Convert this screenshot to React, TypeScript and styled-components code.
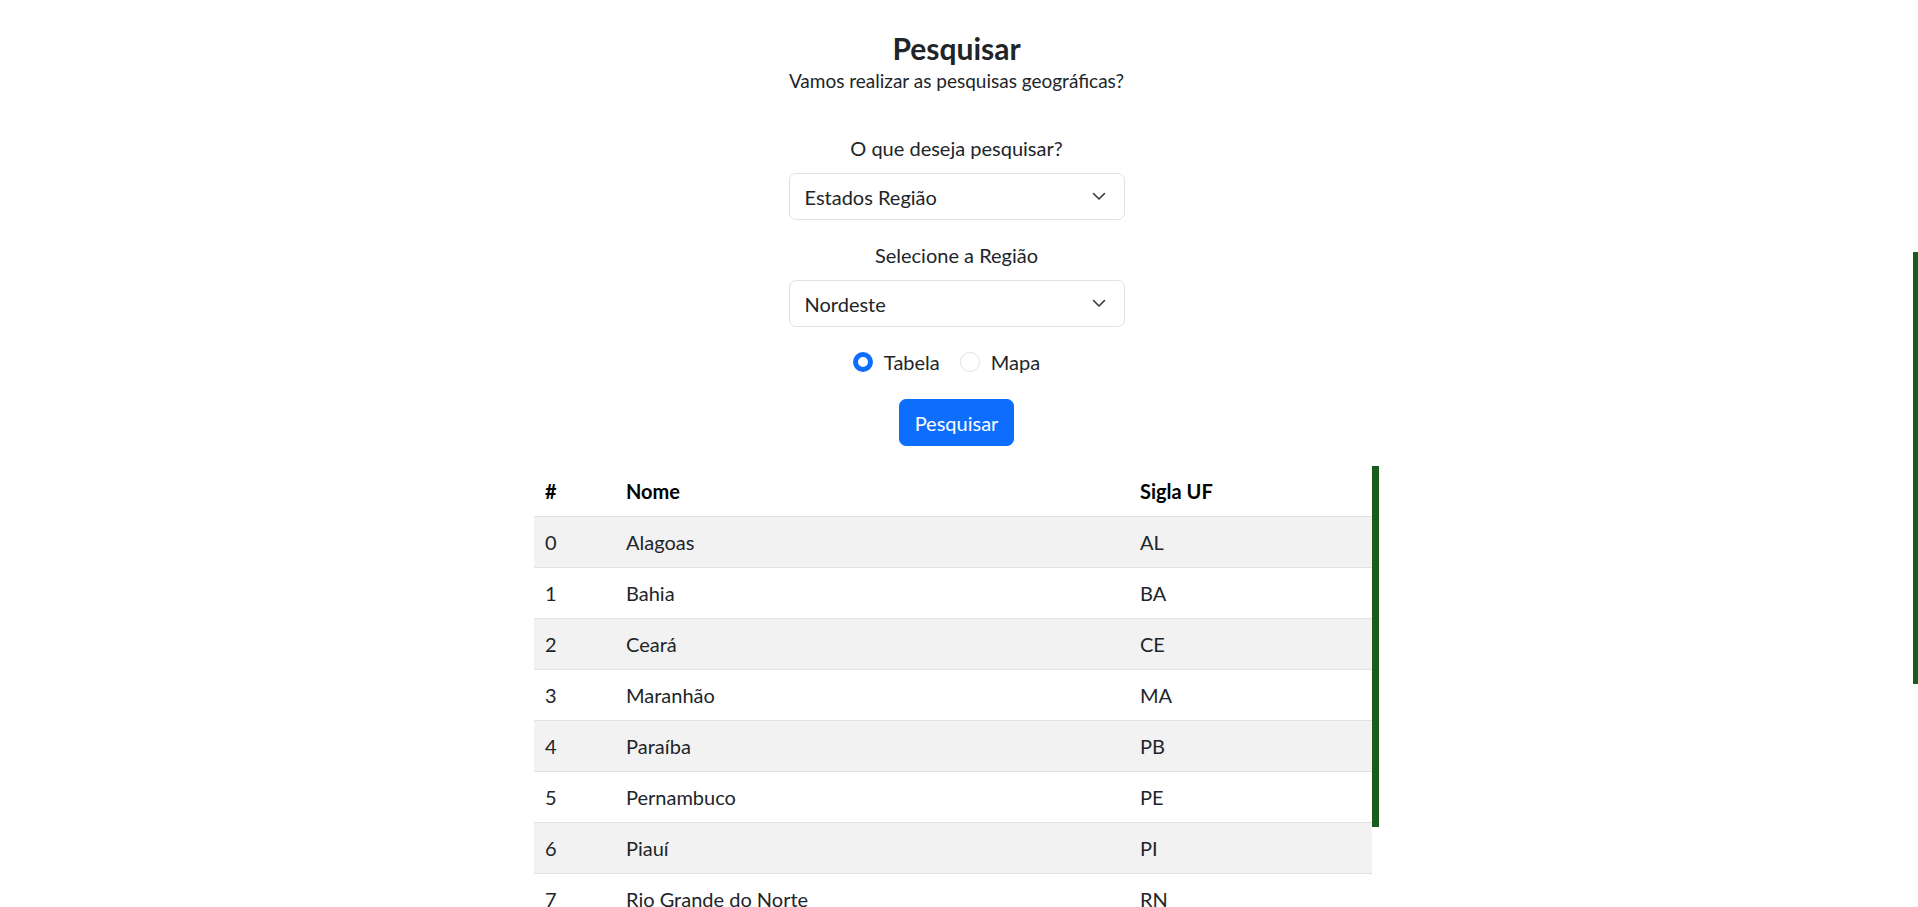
import React from "react";
import styled, { createGlobalStyle } from "styled-components";

const FONT = `Lato, "Liberation Sans", sans-serif`;

const GlobalStyle = createGlobalStyle`
  html, body {
    margin: 0;
    padding: 0;
    height: 100%;
    overflow: hidden;
    background: #ffffff;
  }
  body {
    font-family: ${FONT};
    font-size: 20px;
    line-height: 30px;
    color: #212529;
  }
  * { box-sizing: border-box; }
`;

const Page = styled.div`
  display: flex;
  align-items: flex-start;
  width: 100%;
`;

const Main = styled.main`
  flex: 1;
  display: flex;
  flex-direction: column;
  align-items: center;
  padding-top: 30px;
  min-width: 0;
  & > * {
    flex-shrink: 0;
  }
`;

const ScrollTrack = styled.div<{ $w: number }>`
  flex: 0 0 ${(p) => p.$w}px;
  width: ${(p) => p.$w}px;
  display: flex;
  flex-direction: column;
`;

const ScrollThumb = styled.div<{ $top: number; $h: number }>`
  margin-top: ${(p) => p.$top}px;
  height: ${(p) => p.$h}px;
  background: #1c5a1d;
`;

const Title = styled.h4`
  margin: 0;
  font-size: 30px;
  line-height: 36px;
  font-weight: 700;
  color: #212529;
`;

const Subtitle = styled.p`
  margin: 0;
  font-size: 19px;
  line-height: 30px;
`;

const Form = styled.form`
  width: 336px;
  margin-top: 37px;
  display: flex;
  flex-direction: column;
  align-items: stretch;
`;

const FieldLabel = styled.label<{ $first?: boolean }>`
  display: block;
  text-align: center;
  margin-top: ${(p) => (p.$first ? 0 : 20)}px;
  margin-bottom: 10px;
`;

const SelectBox = styled.div`
  height: 47px;
  display: flex;
  align-items: center;
  justify-content: space-between;
  padding: 0 17px 0 15px;
  border: 1px solid #dee2e6;
  border-radius: 7px;
  background: #fff;
  color: #212529;
`;

const Chevron = styled.svg`
  width: 14px;
  height: 9px;
  margin-right: 1px;
`;

const RadioRow = styled.div`
  display: flex;
  justify-content: center;
  margin-top: 20px;
  height: 30px;
`;

const RadioItem = styled.label`
  display: flex;
  align-items: center;
  margin-right: 20px;
`;

const RadioDot = styled.span<{ $checked?: boolean }>`
  width: 20px;
  height: 20px;
  border-radius: 50%;
  margin-right: 11px;
  flex: 0 0 20px;
  background: #fff;
  border: ${(p) => (p.$checked ? "5px solid #0d6efd" : "1px solid #dee2e6")};
`;

const SubmitButton = styled.button`
  margin-top: 22px;
  height: 47px;
  padding: 0 15px;
  border: 1px solid #0d6efd;
  border-radius: 7px;
  background: #0d6efd;
  color: #fff;
  font-family: ${FONT};
  font-size: 20px;
  line-height: 30px;
`;

const TableArea = styled.div`
  margin-top: 20px;
  width: 845px;
  display: flex;
  align-items: flex-start;
`;

const Table = styled.table`
  flex: 1;
  border-collapse: collapse;
  table-layout: fixed;
  width: 838px;
`;

const Th = styled.th<{ $w: number }>`
  width: ${(p) => p.$w}px;
  text-align: left;
  font-weight: 700;
  color: #000;
  padding: 10px 10px 10px 11px;
  line-height: 30px;
  border-bottom: 1px solid #dee2e6;
`;

const Tr = styled.tr<{ $striped: boolean }>`
  background: ${(p) => (p.$striped ? "#f2f2f2" : "#ffffff")};
`;

const Td = styled.td`
  padding: 10px 10px 10px 11px;
  line-height: 30px;
  border-bottom: 1px solid #dee2e6;
  color: #212529;
  white-space: nowrap;
`;

const states = [
  ["Alagoas", "AL"],
  ["Bahia", "BA"],
  ["Ceará", "CE"],
  ["Maranhão", "MA"],
  ["Paraíba", "PB"],
  ["Pernambuco", "PE"],
  ["Piauí", "PI"],
  ["Rio Grande do Norte", "RN"],
  ["Sergipe", "SE"],
];

const ChevronIcon = () => (
  <Chevron viewBox="0 0 14 9" fill="none">
    <path d="M1.5 1.5 L7 7 L12.5 1.5" stroke="#343a40" strokeWidth="1.6" strokeLinecap="round" strokeLinejoin="round" />
  </Chevron>
);

export default function App() {
  return (
    <>
      <GlobalStyle />
      <Page>
        <Main>
          <Title>Pesquisar</Title>
          <Subtitle>Vamos realizar as pesquisas geográficas?</Subtitle>
          <Form onSubmit={(e) => e.preventDefault()}>
            <FieldLabel $first>O que deseja pesquisar?</FieldLabel>
            <SelectBox>
              <span>Estados Região</span>
              <ChevronIcon />
            </SelectBox>
            <FieldLabel>Selecione a Região</FieldLabel>
            <SelectBox>
              <span>Nordeste</span>
              <ChevronIcon />
            </SelectBox>
          </Form>
          <RadioRow>
            <RadioItem>
              <RadioDot $checked />
              Tabela
            </RadioItem>
            <RadioItem>
              <RadioDot />
              Mapa
            </RadioItem>
          </RadioRow>
          <SubmitButton type="button">Pesquisar</SubmitButton>
          <TableArea>
            <Table>
              <thead>
                <tr>
                  <Th $w={81}>#</Th>
                  <Th $w={514}>Nome</Th>
                  <Th $w={243}>Sigla UF</Th>
                </tr>
              </thead>
              <tbody>
                {states.map(([nome, uf], i) => (
                  <Tr key={uf} $striped={i % 2 === 0}>
                    <Td>{i}</Td>
                    <Td>{nome}</Td>
                    <Td>{uf}</Td>
                  </Tr>
                ))}
              </tbody>
            </Table>
            <ScrollTrack $w={7}>
              <ScrollThumb $top={0} $h={361} />
            </ScrollTrack>
          </TableArea>
        </Main>
        <ScrollTrack $w={5}>
          <ScrollThumb $top={252} $h={432} />
        </ScrollTrack>
      </Page>
    </>
  );
}
